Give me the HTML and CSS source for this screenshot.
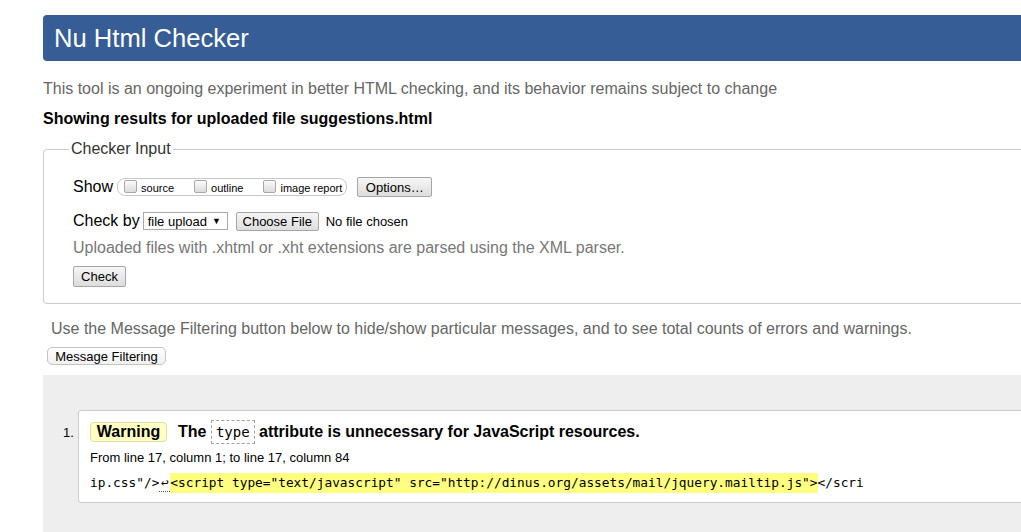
FILE: index.html
```html
<!DOCTYPE html>
<html>
<head>
<meta charset="utf-8">
<title>Nu Html Checker</title>
<link rel="stylesheet" href="styles.css">
</head>
<body>
<div class="page">
  <h1 class="title">Nu Html Checker</h1>
  <p class="intro">This tool is an ongoing experiment in better HTML checking, and its behavior remains subject to change</p>
  <p class="showing">Showing results for uploaded file suggestions.html</p>

  <fieldset class="input">
    <legend class="legend">Checker Input</legend>
    <div class="row row-show">
      <span class="label">Show</span>
      <span class="opts">
        <span class="cb"></span><span class="cblabel">source</span>
        <span class="cb"></span><span class="cblabel">outline</span>
        <span class="cb"></span><span class="cblabel">image report</span>
      </span>
      <span class="btn btn-options">Options…</span>
    </div>
    <div class="row row-check">
      <span class="label">Check by</span>
      <span class="select">file upload <span class="arrow">▼</span></span>
      <span class="btn btn-file">Choose File</span>
      <span class="nofile">No file chosen</span>
    </div>
    <p class="note">Uploaded files with .xhtml or .xht extensions are parsed using the XML parser.</p>
    <div class="row row-submit">
      <span class="btn btn-check">Check</span>
    </div>
  </fieldset>

  <p class="filter-note">Use the Message Filtering button below to hide/show particular messages, and to see total counts of errors and warnings.</p>
  <span class="btn-filter">Message Filtering</span>

  <div class="results">
    <div class="msg-item">
      <span class="num">1.</span>
      <div class="msg">
        <div class="msg-head">
          <span class="badge">Warning</span>
          <span class="msg-text">The <code class="code">type</code> attribute is unnecessary for JavaScript resources.</span>
        </div>
        <p class="loc">From line 17, column 1; to line 17, column 84</p>
        <p class="extract">ip.css"/&gt;<span class="lf">↩</span><mark class="hl">&lt;script type="text/javascript" src="http://dinus.org/assets/mail/jquery.mailtip.js"&gt;</mark>&lt;/scri</p>
      </div>
    </div>
  </div>
</div>
</body>
</html>
```

FILE: styles.css
```css
html, body {
  margin: 0;
  padding: 0;
  overflow: hidden;
  background: #fff;
}

body {
  font-family: "Liberation Sans", Arial, sans-serif;
  font-size: 16px;
  color: #000;
}

.page {
  width: 1060px;
  padding: 15px 0 0 43px;
}

.title {
  margin: 0;
  height: 46px;
  line-height: 46px;
  background: #365d95;
  color: #fff;
  font-weight: normal;
  font-size: 25.6px;
  padding-left: 11px;
  border-radius: 4px;
}

.intro {
  margin: 18px 0 0;
  line-height: 20px;
  color: #666;
}

.showing {
  margin: 10px 0 0;
  line-height: 20px;
  font-weight: bold;
}

.input {
  margin: 10px 0 0;
  padding: 0 0 16px 29px;
  border: 1px solid #ccc;
  border-radius: 4px;
  min-width: 0;
}

.legend {
  padding: 0 2px;
  margin-left: -4px;
  line-height: 20px;
  color: #333;
}

.row {
  display: flex;
  align-items: center;
  height: 20px;
  font-size: 13px;
}

.label {
  font-size: 16px;
  line-height: 20px;
}

.row-show { margin-top: 18px; }
.row-check { margin-top: 14px; }
.row-submit { margin-top: 8px; height: 21px; }

.opts {
  display: inline-flex;
  align-items: center;
  height: 16px;
  margin-left: 4px;
  padding: 0 4px 0 6px;
  border: 1px solid #c8c8c8;
  border-radius: 8px;
}

.cb {
  display: inline-block;
  width: 11px;
  height: 11px;
  border: 1px solid #a8a8a8;
  border-radius: 2px;
  background: linear-gradient(#fcfcfc, #dcdcdc);
  margin-right: 4px;
  position: relative;
  top: -1px;
}

.cblabel {
  font-size: 11px;
  line-height: 16px;
  position: relative;
  top: 1px;
  margin-right: 20px;
}

.cblabel:last-child { margin-right: 0; }

.btn {
  display: inline-flex;
  align-items: center;
  justify-content: center;
  box-sizing: border-box;
  border: 1px solid #a6a6a6;
  border-radius: 2px;
  background: linear-gradient(#f6f6f6, #dddddd);
  font-size: 13px;
  color: #000;
}

.btn-options {
  width: 75px;
  height: 20px;
  margin-left: 10px;
}

.select {
  display: inline-flex;
  align-items: center;
  box-sizing: border-box;
  width: 85px;
  height: 18px;
  margin-left: 3px;
  padding-left: 4px;
  border: 1px solid #a9a9a9;
  background: #fff;
  font-size: 13px;
}

.arrow {
  font-size: 9px;
  margin-left: 5px;
}

.btn-file {
  width: 83px;
  height: 19px;
  margin-left: 8px;
}

.nofile {
  margin-left: 7px;
  font-size: 13px;
}

.note {
  margin: 7px 0 0;
  line-height: 20px;
  color: #777;
}

.btn-check {
  width: 53px;
  height: 21px;
}

.filter-note {
  margin: 15px 0 0;
  padding-left: 8px;
  line-height: 20px;
  color: #666;
}

.btn-filter {
  display: inline-flex;
  align-items: center;
  justify-content: center;
  box-sizing: border-box;
  width: 119px;
  height: 18px;
  margin: 8px 0 0 4px;
  border: 1px solid #c4c4c4;
  border-radius: 5px;
  background: linear-gradient(#ffffff, #f0f0f0);
  font-size: 13px;
}

.results {
  margin-top: 10px;
  background: #eeeeee;
  padding: 35px 0 60px 20px;
}

.msg-item {
  display: flex;
  align-items: flex-start;
}

.num {
  width: 15px;
  font-size: 13px;
  line-height: 18px;
  padding-top: 14px;
}

.msg {
  flex: 1;
  background: #fff;
  border: 1px solid #cccccc;
  border-radius: 3px;
  padding: 9px 12px 9px 11px;
}

.msg-head {
  display: flex;
  align-items: center;
  height: 24px;
  font-weight: bold;
}

.badge {
  display: inline-flex;
  align-items: center;
  justify-content: center;
  box-sizing: border-box;
  width: 77px;
  height: 20px;
  background: #ffffc4;
  border: 1px solid #e2dca5;
  border-radius: 4px;
  margin-right: 11px;
}

.msg-text {
  line-height: 24px;
}

.code {
  display: inline-block;
  box-sizing: border-box;
  height: 24px;
  line-height: 22px;
  padding: 0 4px;
  border: 1px dashed #a0a0a0;
  font-family: "DejaVu Sans Mono", monospace;
  font-size: 14px;
  font-weight: normal;
  vertical-align: top;
}

.loc {
  margin: 5px 0 0;
  font-size: 13px;
  line-height: 18px;
}

.extract {
  margin: 6px 0 0;
  font-family: "DejaVu Sans Mono", monospace;
  font-size: 12.8px;
  line-height: 20px;
  white-space: pre;
}

.lf {
  display: inline-block;
  width: 11px;
  text-align: center;
  border-bottom: 1px dotted #555;
  line-height: 16px;
}

.hl {
  background: #ffff80;
  color: #000;
  display: inline-block;
  line-height: 20px;
}
```
